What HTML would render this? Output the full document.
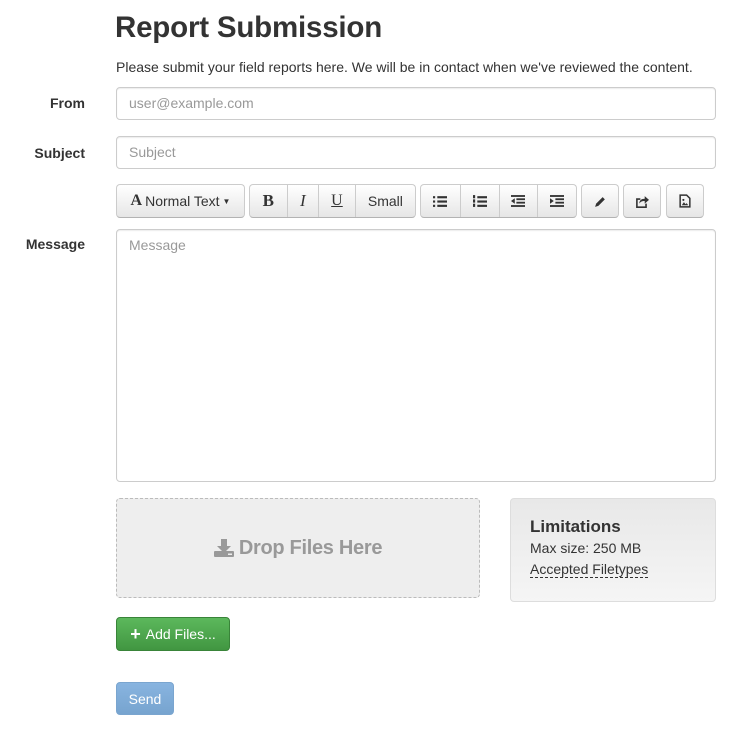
<!DOCTYPE html>
<html><head><style>
*{box-sizing:border-box;margin:0;padding:0}
body{width:742px;height:740px;background:#fff;font-family:"Liberation Sans",sans-serif;color:#333;position:relative;overflow:hidden}
.a{position:absolute}
h1{position:absolute;left:115px;top:11px;font-size:29.5px;font-weight:bold;color:#333;letter-spacing:-0.2px}
.lbl{position:absolute;font-size:14px;font-weight:bold;right:657px;text-align:right}
.inp{position:absolute;left:116px;width:600px;border:1px solid #ccc;border-radius:4px;background:#fff;color:#999;font-size:14px;padding:7px 12px;box-shadow:inset 0 1px 1px rgba(0,0,0,.075)}
.g{position:absolute;top:184px;height:34px;display:flex;border:1px solid #ccc;border-bottom-color:#b3b3b3;border-radius:4px;overflow:hidden;background:linear-gradient(#fff,#e6e6e6)}
.g div{height:100%;display:flex;align-items:center;justify-content:center;border-left:1px solid #ccc;font-size:14px;color:#333}
.g div:first-child{border-left:none}
.ico{display:inline-block;width:14px;height:12px}
</style></head><body>
<h1>Report Submission</h1>
<div class="a" style="left:116px;top:59px;font-size:14px">Please submit your field reports here. We will be in contact when we've reviewed the content.</div>
<div class="lbl" style="top:95px">From</div>
<div class="inp" style="top:87px;height:33px">user@example.com</div>
<div class="lbl" style="top:145px">Subject</div>
<div class="inp" style="top:136px;height:33px">Subject</div>
<div class="g" style="left:116px;width:129px"><div style="width:100%"><span style="font-family:'Liberation Serif',serif;font-weight:bold;font-size:16px;margin-right:3px">A</span>Normal Text <span style="font-size:8px;margin-left:3px">▼</span></div></div>
<div class="g" style="left:249px;width:167px"><div style="width:37px;font-family:'Liberation Serif',serif;font-weight:bold;font-size:17px">B</div><div style="width:32px;font-family:'Liberation Serif',serif;font-style:italic;font-size:17px">I</div><div style="width:37px;font-family:'Liberation Serif',serif;text-decoration:underline;font-size:16px">U</div><div style="width:61px">Small</div></div>
<div class="g" style="left:420px;width:157px">
<div style="width:39px"><svg class="ico" viewBox="0 0 13 11"><g fill="#333"><rect x="0" y="1" width="2" height="2"/><rect x="0" y="5" width="2" height="2"/><rect x="0" y="9" width="2" height="2"/><rect x="4" y="1" width="9" height="2"/><rect x="4" y="5" width="9" height="2"/><rect x="4" y="9" width="9" height="2"/></g></svg></div>
<div style="width:39px"><svg class="ico" viewBox="0 0 13 11"><g fill="#333"><rect x="0" y="0" width="2" height="3"/><rect x="0" y="4" width="2" height="3"/><rect x="0" y="8" width="2" height="3"/><rect x="4" y="1" width="9" height="2"/><rect x="4" y="5" width="9" height="2"/><rect x="4" y="9" width="9" height="2"/></g></svg></div>
<div style="width:39px"><svg class="ico" viewBox="0 0 13 11"><g fill="#333"><rect x="0" y="0" width="13" height="1.7"/><rect x="5" y="3" width="8" height="1.7"/><rect x="5" y="6.2" width="8" height="1.7"/><rect x="0" y="9.3" width="13" height="1.7"/><path d="M0 5.5L3.5 3v5z"/></g></svg></div>
<div style="width:39px"><svg class="ico" viewBox="0 0 13 11"><g fill="#333"><rect x="0" y="0" width="13" height="1.7"/><rect x="5" y="3" width="8" height="1.7"/><rect x="5" y="6.2" width="8" height="1.7"/><rect x="0" y="9.3" width="13" height="1.7"/><path d="M3.5 5.5L0 3v5z"/></g></svg></div>
</div>
<div class="g" style="left:581px;width:38px"><div style="width:100%"><svg width="13" height="13" viewBox="0 0 12 12"><path d="M1 11l1-3 6-6 2 2-6 6z" fill="#333"/></svg></div></div>
<div class="g" style="left:623px;width:38px"><div style="width:100%"><svg width="14" height="13" viewBox="0 0 13 12"><path d="M1 3h4v1.5H2.5v6h7V8H11v4H1z" fill="#333"/><path d="M4 8c0-3 2-4.5 5-4.5V1l4 3.5L9 8V5.5C7 5.5 5 6 4 8z" fill="#333"/></svg></div></div>
<div class="g" style="left:666px;width:38px"><div style="width:100%"><svg width="12" height="14" viewBox="0 0 11 13"><path d="M1 1h6l3 3v8H1z" fill="none" stroke="#333" stroke-width="1.4"/><path d="M2.5 10.5l2-3 1.5 2 1-1 1.5 2z" fill="#333"/><circle cx="4" cy="5.5" r="1" fill="#333"/></svg></div></div>
<div class="lbl" style="top:236px">Message</div>
<div class="inp" style="top:229px;height:253px">Message</div>
<div class="a" style="left:116px;top:498px;width:364px;height:100px;border:1px dashed #bbb;border-radius:4px;background:#eee;display:flex;align-items:center;justify-content:center;color:#999;font-weight:bold;font-size:20px;letter-spacing:-0.3px"><svg width="20" height="18" viewBox="0 0 20 18" style="margin-right:5px"><path d="M7 0h6v7h4l-7 7-7-7h4z" fill="#999"/><rect x="0" y="12" width="20" height="6" rx="1" fill="#999"/><rect x="14" y="14.5" width="4" height="1.5" fill="#eee"/></svg>Drop Files Here</div>
<div class="a" style="left:510px;top:498px;width:206px;height:104px;border:1px solid #ddd;border-radius:4px;background:linear-gradient(#e8e8e8,#f5f5f5);padding:18px 19px">
<div style="font-size:17px;font-weight:bold">Limitations</div>
<div style="font-size:14px;margin-top:3px">Max size: 250 MB</div>
<div style="font-size:14px;margin-top:6px;display:inline-block;border-bottom:1px dashed #333;line-height:15px">Accepted Filetypes</div>
</div>
<div class="a" style="left:116px;top:617px;width:114px;height:34px;border:1px solid #398439;border-radius:4px;background:linear-gradient(#5cb85c,#419641);color:#fff;font-size:14px;display:flex;align-items:center;justify-content:center"><span style="font-weight:bold;font-size:18px;margin-right:5px">+</span>Add Files...</div>
<div class="a" style="left:116px;top:682px;width:58px;height:33px;border:1px solid #7aa5cf;border-radius:4px;background:linear-gradient(#88b4e0,#77a4cf);color:#fff;font-size:14px;display:flex;align-items:center;justify-content:center">Send</div>
</body></html>
